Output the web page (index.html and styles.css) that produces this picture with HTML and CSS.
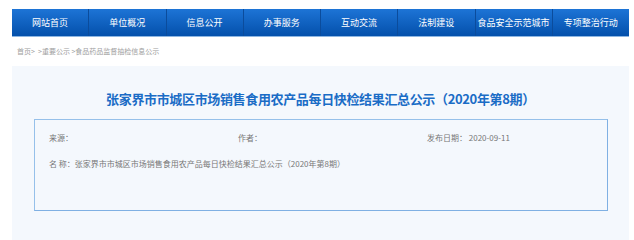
FILE: index.html
```html
<!DOCTYPE html>
<html>
    <head>
        <meta charset="utf-8"/>
        <title>张家界市市城区市场销售食用农产品每日快检结果汇总公示</title>
        <link rel="stylesheet" href="styles.css">
    </head>
    <body>
        <div class="wrap">
            <div class="nav">
                <a href="#">网站首页</a>
                <a href="#">单位概况</a>
                <a href="#">信息公开</a>
                <a href="#">办事服务</a>
                <a href="#">互动交流</a>
                <a href="#">法制建设</a>
                <a href="#">食品安全示范城市</a>
                <a href="#">专项整治行动</a>
            </div>
            <div class="crumb">首页&gt; &nbsp;&gt;重要公示 &gt;食品药品监督抽检信息公示</div>
            <div class="content">
                <div class="title">张家界市市城区市场销售食用农产品每日快检结果汇总公示（2020年第8期）</div>
                <div class="box">
                    <div class="meta">
                        <span>来源：</span>
                        <span>作者：</span>
                        <span>发布日期： 2020-09-11</span>
                    </div>
                    <div class="name">名 称：张家界市市城区市场销售食用农产品每日快检结果汇总公示（2020年第8期）</div>
                </div>
            </div>
        </div>
    </body>
</html>
```
FILE: styles.css
```css
body{margin:0;padding:0;background-color:#fff;font-family:'Noto Sans CJK SC','Liberation Sans',sans-serif;}
.wrap{width:617px;margin-left:12px;padding-top:9px;}
.nav{display:flex;height:27px;background:linear-gradient(#1d74d6,#0450ab);border-bottom:1px solid #8db6e2;}
.nav a{flex:1;color:#fff;text-decoration:none;font-size:9px;line-height:27px;text-align:center;border-left:1px solid #0b4c9c;}
.nav a:first-child{border-left:none;}
.crumb{height:29px;line-height:29px;padding-left:5px;font-size:7px;color:#a0a0a0;}
.content{background-color:#f4f8fd;padding-top:23px;height:160px;}
.title{text-align:center;font-size:13px;font-weight:bold;line-height:20px;letter-spacing:-0.35px;color:#1a6cc6;margin-bottom:10px;}
.box{margin:0 21px 0 22px;height:90px;border:1px solid #95c0ea;border-right-color:#7fb0e3;border-bottom-color:#7fb0e3;}
.meta{display:grid;grid-template-columns:189px 189px 1fr;padding:11px 0 0 14px;font-size:8px;line-height:14px;color:#777;}
.name{padding:12px 0 0 14px;font-size:8px;line-height:14px;color:#777;}
```
